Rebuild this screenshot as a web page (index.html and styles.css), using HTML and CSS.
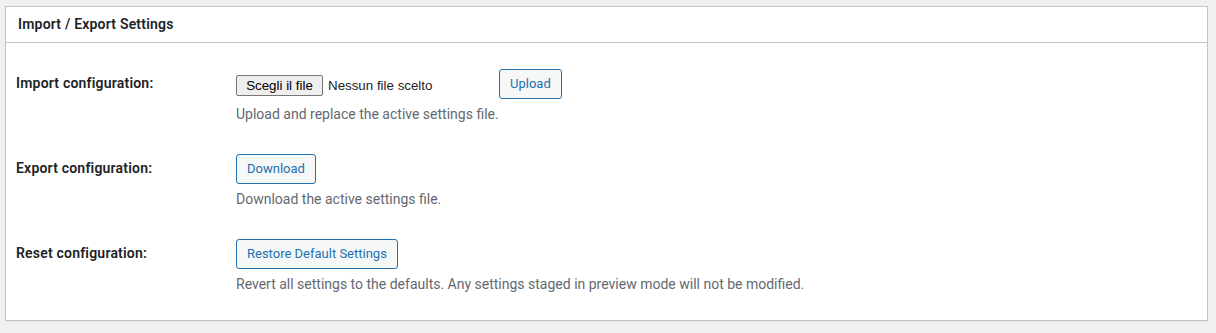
FILE: index.html
```html
<!DOCTYPE html>
<html lang="en">
<head>
<meta charset="utf-8">
<title>Import / Export Settings</title>
<link rel="stylesheet" href="styles.css">
</head>
<body>
<div class="page">
  <section class="panel">
    <header class="panel-head">
      <h2 class="panel-title">Import / Export Settings</h2>
    </header>
    <div class="panel-body">
      <div class="row">
        <div class="label">Import configuration:</div>
        <div class="field">
          <div class="controls">
            <div class="file-input">
              <span class="file-btn">Scegli il file</span>
              <span class="file-name">Nessun file scelto</span>
            </div>
            <button class="btn" type="button">Upload</button>
          </div>
          <p class="description">Upload and replace the active settings file.</p>
        </div>
      </div>
      <div class="row">
        <div class="label">Export configuration:</div>
        <div class="field">
          <div class="controls">
            <button class="btn" type="button">Download</button>
          </div>
          <p class="description">Download the active settings file.</p>
        </div>
      </div>
      <div class="row">
        <div class="label">Reset configuration:</div>
        <div class="field">
          <div class="controls">
            <button class="btn" type="button">Restore Default Settings</button>
          </div>
          <p class="description">Revert all settings to the defaults. Any settings staged in preview mode will not be modified.</p>
        </div>
      </div>
    </div>
  </section>
</div>
</body>
</html>
```

FILE: styles.css
```css
* { box-sizing: border-box; }

html, body {
  margin: 0;
  padding: 0;
  background: #f0f0f1;
  font-family: Roboto, "Liberation Sans", sans-serif;
  color: #1d2327;
}

.page {
  padding: 6px 8px 12px 5px;
}

.panel {
  background: #fff;
  border: 1px solid #c3c4c7;
  box-shadow: 0 1px 1px rgba(0,0,0,0.04);
}

.panel-head {
  height: 36px;
  border-bottom: 1px solid #c3c4c7;
  display: flex;
  align-items: center;
  padding: 0 12px;
}

.panel-title {
  margin: 0;
  font-size: 14px;
  font-weight: 600;
  line-height: 1.4;
  letter-spacing: 0.2px;
  color: #1d2327;
}

.panel-body {
  padding: 11px 10px;
}

.row {
  display: grid;
  grid-template-columns: 210px 1fr;
  height: 85px;
}

.label {
  padding: 20px 10px 0 0;
  font-size: 14px;
  font-weight: 600;
  line-height: 1.3;
  letter-spacing: 0.2px;
  color: #1d2327;
}

.field {
  padding: 15px 10px 0 10px;
}

.controls {
  display: flex;
  align-items: center;
  height: 30px;
}

.file-input {
  width: 263px;
  display: flex;
  align-items: center;
  font-family: "Liberation Sans", Arial, sans-serif;
  font-size: 13.33px;
  color: #000;
}

.file-btn {
  display: inline-flex;
  align-items: center;
  justify-content: center;
  height: 21px;
  width: 87px;
  border: 1px solid #767676;
  border-radius: 2px;
  background: #efefef;
  color: #000;
  margin-top: 3px;
}

.file-name {
  margin-left: 5px;
  margin-top: 3px;
  color: #1d2327;
}

.btn {
  font-family: inherit;
  font-size: 13px;
  line-height: 28px;
  height: 30px;
  padding: 0 10px;
  color: #2271b1;
  border: 1px solid #2271b1;
  border-radius: 3px;
  background: #f6f7f7;
  cursor: pointer;
}

.description {
  margin: 5px 0 0;
  font-size: 14px;
  line-height: 20px;
  color: #646970;
}
```
